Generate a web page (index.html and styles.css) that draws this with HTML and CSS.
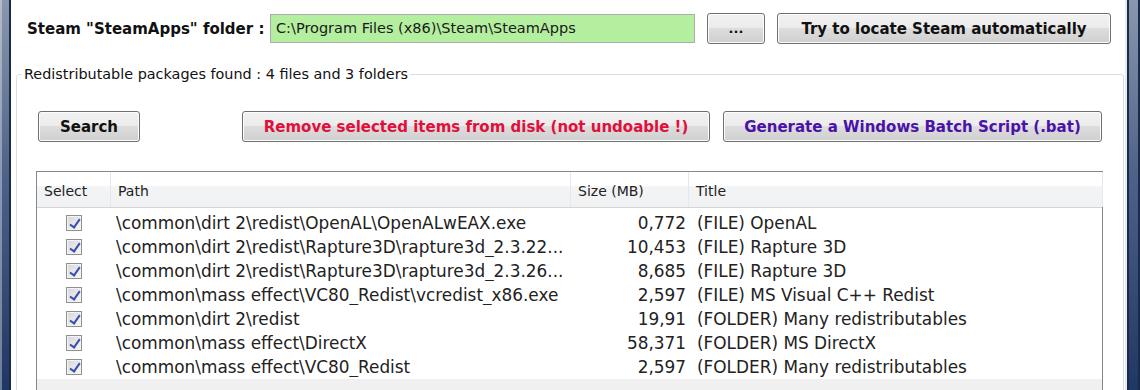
FILE: index.html
```html
<!DOCTYPE html>
<html>
<head>
<meta charset="utf-8">
<link rel="stylesheet" href="styles.css">
</head>
<body>
<div class="window">
  <div class="frame frame-left"></div>
  <div class="content">
    <div class="top-row">
      <span class="label">Steam "SteamApps" folder :</span>
      <div class="path-input">C:\Program Files (x86)\Steam\SteamApps</div>
      <button class="btn btn-browse">...</button>
      <button class="btn btn-locate">Try to locate Steam automatically</button>
    </div>
    <fieldset class="group">
      <legend>Redistributable packages found : 4 files and 3 folders</legend>
      <div class="actions">
        <button class="btn btn-search">Search</button>
        <button class="btn btn-remove">Remove selected items from disk (not undoable !)</button>
        <button class="btn btn-generate">Generate a Windows Batch Script (.bat)</button>
      </div>
      <div class="listview">
        <div class="lv-header">
          <div class="col c-select">Select</div>
          <div class="col c-path">Path</div>
          <div class="col c-size">Size (MB)</div>
          <div class="col c-title">Title</div>
          <div class="col c-rest"></div>
        </div>
        <div class="lv-body">
          <div class="row"><div class="c-select"><span class="check"></span></div><div class="c-path">\common\dirt 2\redist\OpenAL\OpenALwEAX.exe</div><div class="c-size">0,772</div><div class="c-title">(FILE) OpenAL</div></div>
          <div class="row"><div class="c-select"><span class="check"></span></div><div class="c-path">\common\dirt 2\redist\Rapture3D\rapture3d_2.3.22...</div><div class="c-size">10,453</div><div class="c-title">(FILE) Rapture 3D</div></div>
          <div class="row"><div class="c-select"><span class="check"></span></div><div class="c-path">\common\dirt 2\redist\Rapture3D\rapture3d_2.3.26...</div><div class="c-size">8,685</div><div class="c-title">(FILE) Rapture 3D</div></div>
          <div class="row"><div class="c-select"><span class="check"></span></div><div class="c-path">\common\mass effect\VC80_Redist\vcredist_x86.exe</div><div class="c-size">2,597</div><div class="c-title">(FILE) MS Visual C++ Redist</div></div>
          <div class="row"><div class="c-select"><span class="check"></span></div><div class="c-path">\common\dirt 2\redist</div><div class="c-size">19,91</div><div class="c-title">(FOLDER) Many redistributables</div></div>
          <div class="row"><div class="c-select"><span class="check"></span></div><div class="c-path">\common\mass effect\DirectX</div><div class="c-size">58,371</div><div class="c-title">(FOLDER) MS DirectX</div></div>
          <div class="row"><div class="c-select"><span class="check"></span></div><div class="c-path">\common\mass effect\VC80_Redist</div><div class="c-size">2,597</div><div class="c-title">(FOLDER) Many redistributables</div></div>
        </div>
        <div class="lv-scroll"></div>
      </div>
    </fieldset>
  </div>
  <div class="frame frame-right"></div>
</div>
</body>
</html>
```
FILE: styles.css
```css
* { box-sizing: border-box; }
html, body { margin: 0; padding: 0; }
body {
  width: 1140px;
  height: 390px;
  overflow: hidden;
  background: #fff;
  font-family: "DejaVu Sans", Verdana, sans-serif;
  color: #111;
}
.window {
  display: flex;
  height: 390px;
  overflow: hidden;
}
.frame-left {
  width: 11px;
  flex: none;
  background:
    linear-gradient(to right, rgba(255,255,255,0.35) 0, rgba(255,255,255,0.35) 2px, transparent 2px, transparent 9px, #1a2b4a 9px, #1a2b4a 11px),
    linear-gradient(to bottom, #8a97ad 0%, #4d6288 45%, #1f3763 100%);
}
.frame-right {
  width: 15px;
  flex: none;
  background:
    linear-gradient(to right, #e8ecf0 0, #e8ecf0 2px, #1a2b4a 2px, #1a2b4a 4px, transparent 4px, transparent 13px, #1a2b4a 13px),
    linear-gradient(to bottom, #8a97ad 0%, #4d6288 45%, #1f3763 100%);
}
.content {
  flex: 1;
  display: flex;
  flex-direction: column;
  padding: 13px 0 0 5px;
  min-width: 0;
}
.top-row {
  display: flex;
  align-items: center;
  height: 31px;
  padding-left: 11px;
  flex: none;
}
.label {
  font-weight: bold;
  font-size: 15px;
  width: 243px;
  white-space: nowrap;
}
.path-input {
  width: 425px;
  height: 29px;
  background: #b4ee9f;
  border: 1px solid #abadb3;
  font-size: 14.5px;
  line-height: 27px;
  padding-left: 5px;
  color: #1a1a1a;
  white-space: nowrap;
}
.btn {
  font-family: inherit;
  font-weight: bold;
  font-size: 15px;
  height: 31px;
  border: 1px solid #707070;
  border-radius: 3px;
  box-shadow: inset 0 0 0 1px #fcfcfc;
  background: linear-gradient(to bottom, #f2f2f2 0%, #ebebeb 50%, #dddddd 50%, #cfcfcf 100%);
  color: #111;
  padding: 0;
  white-space: nowrap;
  cursor: default;
}
.btn-browse { width: 58px; margin-left: 12px; font-size: 13px; }
.btn-locate { width: 334px; margin-left: 12px; }
.group {
  margin: 22px 0 0 0;
  width: 1108px;
  border: 1px solid #d5dfe5;
  border-radius: 3px;
  padding: 0 0 0 21px;
  flex: none;
  height: 330px;
  min-width: 0;
}
.group legend {
  font-size: 14.4px;
  padding: 0 2px;
  margin-left: -16px;
  color: #111;
  line-height: 16px;
}
.actions {
  display: flex;
  margin-top: 29px;
  height: 31px;
}
.btn-search { width: 102px; }
.btn-remove { width: 468px; margin-left: 102px; color: #e0103c; }
.btn-generate { width: 379px; margin-left: 13px; color: #4a12a8; }
.listview {
  margin-top: 29px;
  margin-left: -2px;
  width: 1067px;
  border: 1px solid #828790;
  border-bottom: none;
  height: 260px;
  display: flex;
  flex-direction: column;
}
.lv-header {
  display: flex;
  height: 36px;
  flex: none;
  background: linear-gradient(to bottom, #ffffff 0%, #ffffff 40%, #f3f4f6 41%, #f0f1f3 100%);
  border-bottom: 1px solid #d5d5d5;
  font-size: 14px;
  color: #222;
}
.lv-header .col {
  display: flex;
  align-items: center;
  padding-top: 2px;
  border-right: 1px solid #e3e8ee;
  padding-left: 7px;
}
.c-select { width: 74px; flex: none; }
.c-path { width: 460px; flex: none; }
.c-size { width: 118px; flex: none; }
.c-title { width: 300px; flex: none; }
.lv-header .c-rest { flex: 1; border-right: none; }
.lv-header .c-title { width: 414px; border-right: 1px solid #e3e8ee; }
.lv-body {
  padding-top: 3px;
  font-size: 16.9px;
  color: #222;
  flex: none;
}
.row {
  display: flex;
  height: 24px;
  align-items: center;
}
.row .c-select {
  display: flex;
  justify-content: center;
}
.row .c-path { padding-left: 5px; white-space: nowrap; overflow: hidden; }
.row .c-size { text-align: right; padding-right: 3px; }
.row .c-title { padding-left: 8px; white-space: nowrap; width: 420px; }
.check {
  display: inline-block;
  width: 16px;
  height: 16px;
  border: 1px solid #8f8f8f;
  background: linear-gradient(135deg, #d8d8d8, #f6f6f6);
  box-shadow: inset 0 0 0 1px #f4f4f4;
  position: relative;
  margin-left: -1px;
}
.check::after {
  content: "";
  position: absolute;
  left: 5px;
  top: 1px;
  width: 4px;
  height: 9px;
  border: solid #3a50b0;
  border-width: 0 2px 2px 0;
  transform: rotate(35deg);
}
.lv-scroll {
  margin-top: 0;
  flex: 1;
  background: #f0f0f0;
}
```
